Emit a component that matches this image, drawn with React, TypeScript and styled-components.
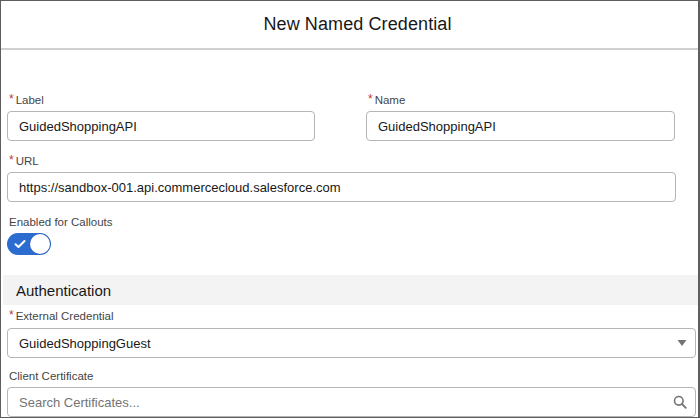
import React from "react";
import styled, { createGlobalStyle } from "styled-components";

const GlobalStyle = createGlobalStyle`
  html, body { margin: 0; padding: 0; background: #ffffff; }
  body { font-family: "Liberation Sans", Arial, sans-serif; }
  * { box-sizing: border-box; }
`;

const Frame = styled.div`
  width: 700px;
  height: 418px;
  border-top: 1px solid #5e5e5e;
  border-left: 1px solid #5e5e5e;
  border-right: 2px solid #5e5e5e;
  border-bottom: 1px solid #5e5e5e;
  overflow: hidden;
  display: flex;
  flex-direction: column;
  background: #fff;
`;

const Header = styled.header`
  height: 49px;
  flex: none;
  display: flex;
  align-items: center;
  justify-content: center;
  padding-left: 16px;
  border-bottom: 2px solid #d0d0d0;
`;

const Title = styled.h1`
  margin: 0;
  font-size: 18px;
  font-weight: 400;
  color: #181818;
  letter-spacing: 0.1px;
`;

const Body = styled.div`
  display: flex;
  flex-direction: column;
  padding: 41px 0 0 0;
`;

const TopSection = styled.div`
  display: flex;
  flex-direction: column;
  gap: 11px;
  padding: 0 22px 0 6px;
`;

const TwoCol = styled.div`
  display: grid;
  grid-template-columns: 308px 309px;
  column-gap: 51px;
`;

const Field = styled.div<{ $gap?: number }>`
  display: flex;
  flex-direction: column;
  gap: ${(p) => p.$gap ?? 2}px;
`;

const Label = styled.label`
  height: 18px;
  display: flex;
  align-items: center;
  font-size: 11.5px;
  color: #444444;
  padding-left: 2px;
`;

const Req = styled.span`
  color: #c23934;
  font-size: 12px;
  margin-right: 2px;
  position: relative;
  top: -1px;
`;

const InputBox = styled.div`
  position: relative;
  height: 30px;
  border: 1px solid #b5b5b5;
  border-radius: 4px;
  display: flex;
  align-items: center;
  padding: 0 32px 0 11px;
  font-size: 13px;
  color: #181818;
  background: #fff;
`;

const Placeholder = styled.span`
  color: #747474;
`;

const IconSlot = styled.span`
  position: absolute;
  right: 8px;
  top: 50%;
  transform: translateY(-50%);
  display: flex;
  align-items: center;
`;

const Toggle = styled.div`
  width: 44px;
  height: 22px;
  border-radius: 11px;
  background: #2c6cd0;
  display: flex;
  align-items: center;
  justify-content: space-between;
  padding: 0 1px 0 7px;
`;

const Knob = styled.span`
  width: 20px;
  height: 20px;
  border-radius: 50%;
  background: #fff;
  box-shadow: 0 0 0 0.5px rgba(0, 0, 0, 0.15);
`;

const SectionBand = styled.div`
  margin: 20px 0 0 2px;
  height: 30px;
  background: #f3f3f3;
  display: flex;
  align-items: center;
  padding-left: 13px;
  font-size: 15px;
  color: #181818;
`;

const AuthSection = styled.div`
  display: flex;
  flex-direction: column;
  gap: 9px;
  padding: 2px 2px 0 6px;
`;

const Check = () => (
  <svg width="12" height="10" viewBox="0 0 12 10">
    <path d="M1.5 5.2 L4.5 8 L10.5 2" fill="none" stroke="#fff" strokeWidth="2" strokeLinecap="round" strokeLinejoin="round" />
  </svg>
);

const Caret = () => (
  <svg width="10" height="7" viewBox="0 0 10 7">
    <path d="M0.5 0.5 H9.5 L5 6.5 Z" fill="#747474" />
  </svg>
);

const Search = () => (
  <svg width="14" height="14" viewBox="0 0 14 14">
    <circle cx="5.8" cy="5.8" r="4.3" fill="none" stroke="#747474" strokeWidth="1.6" />
    <path d="M9 9 L12.8 12.8" stroke="#747474" strokeWidth="1.8" strokeLinecap="round" />
  </svg>
);

export default function App() {
  return (
    <>
      <GlobalStyle />
      <Frame>
        <Header>
          <Title>New Named Credential</Title>
        </Header>
        <Body>
          <TopSection>
            <TwoCol>
              <Field>
                <Label><Req>*</Req>Label</Label>
                <InputBox>GuidedShoppingAPI</InputBox>
              </Field>
              <Field>
                <Label><Req>*</Req>Name</Label>
                <InputBox>GuidedShoppingAPI</InputBox>
              </Field>
            </TwoCol>
            <Field>
              <Label><Req>*</Req>URL</Label>
              <InputBox>https://sandbox-001.api.commercecloud.salesforce.com</InputBox>
            </Field>
            <Field>
              <Label>Enabled for Callouts</Label>
              <Toggle>
                <Check />
                <Knob />
              </Toggle>
            </Field>
          </TopSection>
          <SectionBand>Authentication</SectionBand>
          <AuthSection>
            <Field $gap={3}>
              <Label><Req>*</Req>External Credential</Label>
              <InputBox>
                GuidedShoppingGuest
                <IconSlot><Caret /></IconSlot>
              </InputBox>
            </Field>
            <Field>
              <Label>Client Certificate</Label>
              <InputBox>
                <Placeholder>Search Certificates...</Placeholder>
                <IconSlot><Search /></IconSlot>
              </InputBox>
            </Field>
          </AuthSection>
        </Body>
      </Frame>
    </>
  );
}
